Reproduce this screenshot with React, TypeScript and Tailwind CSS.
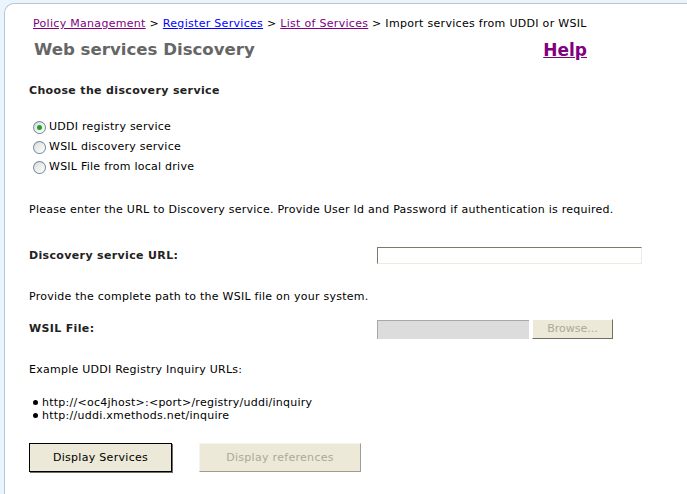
import React from "react";

const font = { fontFamily: '"DejaVu Sans", Verdana, sans-serif' };

const Radio: React.FC<{ checked?: boolean; label: string }> = ({ checked, label }) => (
  <label className="flex items-center h-5">
    <span className="w-[13px] h-[13px] rounded-full border border-[#3a5f86]/70 bg-gradient-to-br from-[#dcdcd6] to-white flex items-center justify-center mr-[3px]">
      {checked && <span className="w-[5px] h-[5px] rounded-full bg-[#21a121]" />}
    </span>
    <span>{label}</span>
  </label>
);

const App: React.FC = () => {
  return (
    <div className="w-[687px] h-[494px] bg-[#eaf4fc] pl-[4px] pt-[3px] overflow-hidden" style={font}>
      <div className="h-full bg-white border-l border-t border-[#bcc6d0] rounded-tl-[10px] text-[11px] tracking-[0.25px] leading-[14px] text-black">
        {/* breadcrumb */}
        <div className="pl-[28px] pt-[13px] tracking-[0.3px]">
          <a className="text-[#800080] underline">Policy Management</a>
          <span> &gt; </span>
          <a className="text-[#0000ff] underline">Register Services</a>
          <span> &gt; </span>
          <a className="text-[#800080] underline">List of Services</a>
          <span> &gt; Import services from UDDI or WSIL</span>
        </div>

        <div className="flex items-end pl-[29px] pt-[9px] w-[582px] tracking-normal">
          <h1 className="text-[16.6px] font-bold text-[#666666] leading-[20px]">Web services Discovery</h1>
          <a className="ml-auto text-[17px] font-bold text-[#800080] underline leading-[20px]">Help</a>
        </div>

        <div className="pl-[24px] pt-[24px]">
          <div className="font-bold text-[#222] tracking-[0.35px]">Choose the discovery service</div>

          <div className="pt-[19px] pl-[4px] flex flex-col">
            <Radio checked label="UDDI registry service" />
            <Radio label="WSIL discovery service" />
            <Radio label="WSIL File from local drive" />
          </div>

          <p className="pt-[26px]">
            Please enter the URL to Discovery service. Provide User Id and Password if authentication is required.
          </p>

          <div className="flex items-center pt-[30px]">
            <div className="w-[348px] font-bold text-[#222] tracking-[0.35px]">Discovery service URL:</div>
            <input className="w-[265px] h-[17px] border border-t-[#7a7a6a] border-l-[#7a7a6a] border-b-[#ecebe0] border-r-[#ecebe0] bg-white" />
          </div>

          <p className="pt-[26px]">Provide the complete path to the WSIL file on your system.</p>

          <div className="flex items-center pt-[15px]">
            <div className="w-[348px] font-bold text-[#222] tracking-[0.35px]">WSIL File:</div>
            <div className="w-[152px] h-[19px] bg-[#dcdcdc] border-t border-l border-[#a8a8a8]" />
            <button className="ml-[3px] w-[81px] h-[20px] bg-[#ece9d8] border border-t-white border-l-white border-b-[#716f64] border-r-[#716f64] text-[#aca899] tracking-normal">
              Browse...
            </button>
          </div>

          <p className="pt-[24px]">Example UDDI Registry Inquiry URLs:</p>

          <ul className="pt-[19px] pl-[4px] leading-[13px]">
            <li className="flex items-center">
              <span className="w-[5px] h-[5px] rounded-full bg-black mr-[4px]" />
              http://&lt;oc4jhost&gt;:&lt;port&gt;/registry/uddi/inquiry
            </li>
            <li className="flex items-center">
              <span className="w-[5px] h-[5px] rounded-full bg-black mr-[4px]" />
              http://uddi.xmethods.net/inquire
            </li>
          </ul>

          <div className="flex pt-[21px]">
            <button className="w-[143px] h-[29px] bg-[#ece9d8] border border-black shadow-[1px_1px_0_#716f64] tracking-[0.3px]">
              Display Services
            </button>
            <button className="ml-[27px] w-[162px] h-[29px] bg-[#ece9d8] border border-t-[#f5f3ea] border-l-[#f5f3ea] border-b-[#a09e94] border-r-[#a09e94] text-[#aca899] tracking-[0.3px]">
              Display references
            </button>
          </div>
        </div>
      </div>
    </div>
  );
};

export default App;
